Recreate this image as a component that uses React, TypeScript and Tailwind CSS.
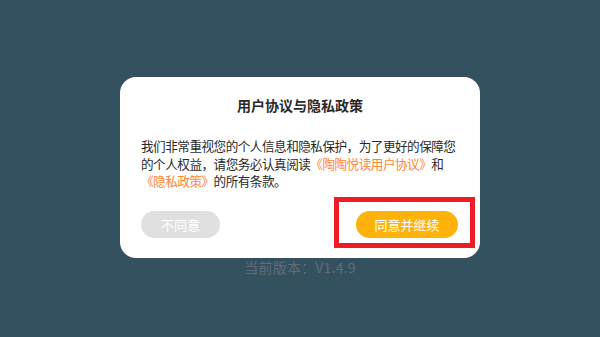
import React from 'react';

const App: React.FC = () => {
  return (
    <div
      className="w-full h-[337px] bg-[#34515f] flex flex-col items-center pt-[77px] overflow-hidden"
      style={{ fontFamily: '"Noto Sans CJK SC", "Noto Sans", sans-serif' }}
    >
      <div className="w-[360px] h-[181px] bg-white rounded-[16px] px-[21px] pt-[18px] pb-[20px] flex flex-col">
        <h2 className="text-center text-[14px] leading-[20px] font-bold text-[#2a2a2a]">
          用户协议与隐私政策
        </h2>
        <p className="mt-[22px] text-[12.6px] leading-[17.5px] tracking-[-0.5px] text-[#2a2a2a] h-[52.5px] whitespace-nowrap">
          我们非常重视您的个人信息和隐私保护，为了更好的保障您
          <br />
          的个人权益，请您务必认真阅读
          <span className="text-[#ff8633]">《陶陶悦读用户协议》</span>和
          <br />
          <span className="text-[#ff8633]">《隐私政策》</span>的所有条款。
        </p>
        <div className="mt-[21.5px] flex items-center justify-between pr-[1px]">
          <button className="w-[79px] h-[27px] rounded-full bg-[#e0e0e0] text-white text-[13px] leading-none">
            不同意
          </button>
          <div className="relative">
            <button className="w-[102px] h-[27px] rounded-full bg-[#ffb30a] text-white text-[13px] leading-none">
              同意并继续
            </button>
            <div className="absolute -left-[22px] -right-[17px] -top-[14px] -bottom-[10px] border-[5px] border-[#ee1c24] pointer-events-none" />
          </div>
        </div>
      </div>
      <div className="text-[14px] leading-[18px] text-[#5e6e76] tracking-[0.2px]">当前版本：V1.4.9</div>
    </div>
  );
};

export default App;
